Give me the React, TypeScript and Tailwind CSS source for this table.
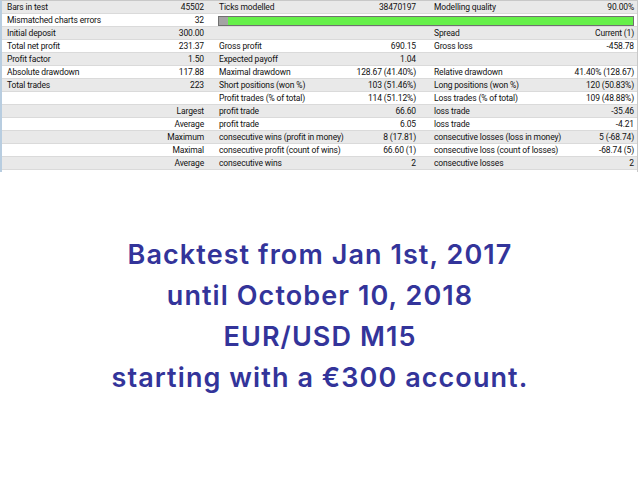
type Cell = { label?: string; value?: string };

const rows: [Cell, Cell | 'bar', Cell | null][] = [
  [{ label: 'Bars in test', value: '45502' }, { label: 'Ticks modelled', value: '38470197' }, { label: 'Modelling quality', value: '90.00%' }],
  [{ label: 'Mismatched charts errors', value: '32' }, 'bar', null],
  [{ label: 'Initial deposit', value: '300.00' }, {}, { label: 'Spread', value: 'Current (1)' }],
  [{ label: 'Total net profit', value: '231.37' }, { label: 'Gross profit', value: '690.15' }, { label: 'Gross loss', value: '-458.78' }],
  [{ label: 'Profit factor', value: '1.50' }, { label: 'Expected payoff', value: '1.04' }, {}],
  [{ label: 'Absolute drawdown', value: '117.88' }, { label: 'Maximal drawdown', value: '128.67 (41.40%)' }, { label: 'Relative drawdown', value: '41.40% (128.67)' }],
  [{ label: 'Total trades', value: '223' }, { label: 'Short positions (won %)', value: '103 (51.46%)' }, { label: 'Long positions (won %)', value: '120 (50.83%)' }],
  [{}, { label: 'Profit trades (% of total)', value: '114 (51.12%)' }, { label: 'Loss trades (% of total)', value: '109 (48.88%)' }],
  [{ value: 'Largest' }, { label: 'profit trade', value: '66.60' }, { label: 'loss trade', value: '-35.46' }],
  [{ value: 'Average' }, { label: 'profit trade', value: '6.05' }, { label: 'loss trade', value: '-4.21' }],
  [{ value: 'Maximum' }, { label: 'consecutive wins (profit in money)', value: '8 (17.81)' }, { label: 'consecutive losses (loss in money)', value: '5 (-68.74)' }],
  [{ value: 'Maximal' }, { label: 'consecutive profit (count of wins)', value: '66.60 (1)' }, { label: 'consecutive loss (count of losses)', value: '-68.74 (5)' }],
  [{ value: 'Average' }, { label: 'consecutive wins', value: '2' }, { label: 'consecutive losses', value: '2' }],
];

function CellView({ c, cls }: { c: Cell; cls: string }) {
  return (
    <div className={`flex justify-between items-center whitespace-nowrap ${cls}`}>
      <span>{c.label}</span>
      <span>{c.value}</span>
    </div>
  );
}

export default function App() {
  return (
    <div className="w-[640px] h-[480px] bg-white overflow-hidden">
      {/* report table */}
      <div
        className="w-[638px] border-l-2 border-l-[#b8cde0] border-r border-r-[#c8c8c8] border-t border-t-[#c8c8c8] text-[8.5px] leading-[13px] tracking-[-0.15px] text-[#111]"
        style={{ fontFamily: 'Roboto, "Liberation Sans", sans-serif' }}
      >
        {rows.map((r, i) => (
          <div
            key={i}
            className={`grid grid-cols-[205px_213px_217px] h-[13px] border-b border-[#dadada] ${i % 2 === 0 ? 'bg-[#e9e9e9]' : 'bg-white'}`}
          >
            <CellView c={r[0]} cls="pl-[5px] pr-[3px]" />
            {r[1] === 'bar' ? (
              <div className="col-span-2 flex items-center pl-[11px] pr-[3px]">
                <div className="flex w-full h-[10px] border border-[#707070]">
                  <div className="w-[9px] bg-[#a4a4a4]" />
                  <div className="flex-1 bg-[#66f04a]" />
                </div>
              </div>
            ) : (
              <CellView c={r[1]} cls="pl-[12px] pr-[4px]" />
            )}
            {r[2] && <CellView c={r[2]} cls="pl-[14px] pr-[3px]" />}
          </div>
        ))}
        <div className="h-[2px]" />
      </div>

      {/* caption */}
      <div
        className="mt-[62px] text-center text-[27px] leading-[41px] font-semibold tracking-[0.04em] text-[#33349a]"
        style={{ fontFamily: 'Inter, "Noto Sans", sans-serif' }}
      >
        <p>Backtest from Jan 1st, 2017</p>
        <p>until October 10, 2018</p>
        <p>EUR/USD M15</p>
        <p>starting with a €300 account.</p>
      </div>
    </div>
  );
}
